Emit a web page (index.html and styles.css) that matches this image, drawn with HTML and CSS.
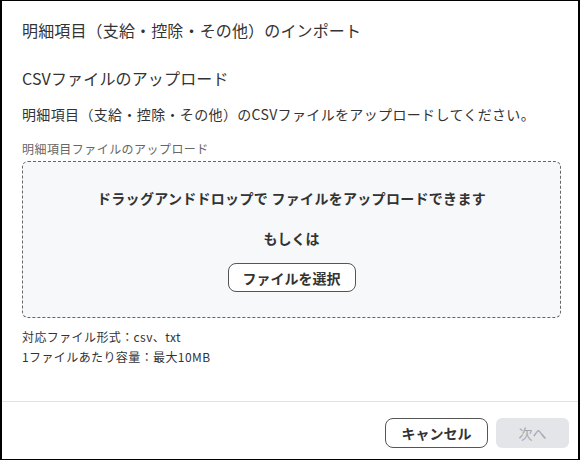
FILE: index.html
```html
<!DOCTYPE html>
<html lang="ja">
<head>
<meta charset="utf-8">
<link rel="stylesheet" href="styles.css">
</head>
<body>
<div class="frame">
  <div class="main">
    <h1 class="title">明細項目（支給・控除・その他）のインポート</h1>
    <h2 class="heading">CSVファイルのアップロード</h2>
    <p class="desc">明細項目（支給・控除・その他）のCSVファイルをアップロードしてください。</p>
    <div class="label">明細項目ファイルのアップロード</div>
    <div class="dropzone">
      <div class="drop-text">ドラッグアンドドロップで ファイルをアップロードできます</div>
      <div class="or-text">もしくは</div>
      <button class="btn btn-outline">ファイルを選択</button>
    </div>
    <div class="notes">
      <div>対応ファイル形式：csv、txt</div>
      <div>1ファイルあたり容量：最大10MB</div>
    </div>
  </div>
  <div class="footer">
    <button class="btn btn-outline btn-cancel">キャンセル</button>
    <button class="btn btn-disabled">次へ</button>
  </div>
</div>
</body>
</html>
```

FILE: styles.css
```css
* { box-sizing: border-box; }
html, body { margin: 0; padding: 0; background: #fff; }
body {
  font-family: "Noto Sans CJK JP", "Noto Sans", sans-serif;
  color: #333;
}
.frame {
  width: 580px;
  height: 460px;
  border-top: 1px solid #000;
  border-left: 2px solid #000;
  border-right: 2px solid #000;
  border-bottom: 1px solid #000;
  display: flex;
  flex-direction: column;
}
.main {
  flex: 1;
  padding: 17px 17px 0 20px;
}
.title {
  margin: 0;
  font-size: 16px;
  line-height: 24px;
  font-weight: 400;
  color: #333;
  letter-spacing: 0.15px;
}
.heading {
  margin: 24px 0 0;
  font-size: 16px;
  line-height: 24px;
  font-weight: 400;
  color: #333;
  letter-spacing: 0.15px;
}
.desc {
  margin: 14px 0 0;
  font-size: 14px;
  line-height: 20px;
  color: #333;
  letter-spacing: 0.35px;
}
.label {
  margin-top: 16px;
  font-size: 12px;
  line-height: 18px;
  color: #666;
  letter-spacing: 0.45px;
}
.dropzone {
  margin-top: 3px;
  height: 157px;
  border: 1px dashed #666;
  border-radius: 6px;
  background: #f7f8fa;
  display: flex;
  flex-direction: column;
  align-items: center;
  padding-top: 26px;
}
.drop-text {
  font-size: 14px;
  line-height: 20px;
  font-weight: 700;
  color: #333;
  letter-spacing: 0.3px;
}
.or-text {
  margin-top: 20px;
  font-size: 14px;
  line-height: 20px;
  font-weight: 700;
  color: #333;
}
.btn {
  font-family: inherit;
  font-size: 14px;
  font-weight: 700;
  line-height: 20px;
  height: 30px;
  border-radius: 8px;
  cursor: pointer;
}
.btn-outline {
  background: #fff;
  border: 1px solid #555;
  color: #333;
  padding: 0 14px;
}
.dropzone .btn-outline {
  margin-top: 15px;
  height: 29px;
}
.notes {
  margin-top: 9px;
  font-size: 12px;
  line-height: 20px;
  color: #333;
  letter-spacing: 0.4px;
}
.footer {
  border-top: 1px solid #e3e3e3;
  padding: 16px 9px 11px 0;
  display: flex;
  justify-content: flex-end;
  gap: 8px;
}
.btn-cancel {
  width: 103px;
  padding: 0;
}
.btn-disabled {
  width: 73px;
  padding: 0;
  border: none;
  background: #e3e5e8;
  color: #a3a7ab;
  font-weight: 400;
  border-radius: 6px;
}
```
